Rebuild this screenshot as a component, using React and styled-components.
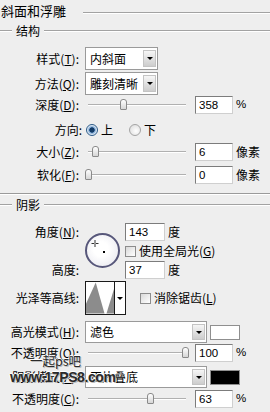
import React from 'react';
import styled, { createGlobalStyle } from 'styled-components';

const Global = createGlobalStyle`
  html, body { margin: 0; padding: 0; background: #eeeeee; }
  body {
    font-family: "Noto Sans CJK SC", "Liberation Sans", sans-serif;
    font-size: 12px;
    color: #000;
  }
`;

const Panel = styled.div`
  position: relative;
  width: 270px;
  height: 412px;
  overflow: hidden;
  display: flex;
  flex-direction: column;
  background: #eeeeee;
`;

const Etched = styled.div`
  flex: 1;
  height: 0;
  border-top: 1px solid #a2a2a2;
  border-bottom: 1px solid #ffffff;
  margin-top: ${(p) => p.$mt || 0}px;
`;

const TitleBar = styled.div`
  height: 21px;
  display: flex;
  align-items: center;
  gap: 17px;
`;

const TitleText = styled.span`
  font-size: 13px;
  line-height: 1;
  padding-left: 1px;
  white-space: nowrap;
`;

const GroupHeader = styled.div`
  height: 18px;
  margin-top: ${(p) => p.$mt}px;
  display: flex;
  align-items: center;
`;

const LeadLine = styled.div`
  width: 12px;
  height: 0;
  border-top: 1px solid #a2a2a2;
  border-bottom: 1px solid #ffffff;
`;

const GroupText = styled.span`
  line-height: 1;
  padding: 0 4px;
  white-space: nowrap;
`;

const Divider = styled.div`
  height: 0;
  margin-top: ${(p) => p.$mt}px;
  border-top: 1px solid #9a9a9a;
  border-bottom: 1px solid #ffffff;
`;

const Row = styled.div`
  display: grid;
  grid-template-columns: 79px 1fr;
  column-gap: 6px;
  align-items: center;
  height: ${(p) => p.$h}px;
  margin-top: ${(p) => p.$mt}px;
`;

const Label = styled.span`
  text-align: right;
  white-space: nowrap;
  line-height: 1;
  margin-right: ${(p) => (p.$shift ? -3 : 0)}px;
`;

const Controls = styled.div`
  display: flex;
  align-items: center;
  height: 100%;
`;

const Slider = styled.div`
  position: relative;
  flex: none;
  width: 104px;
  height: 14px;
`;

const Track = styled.div`
  position: absolute;
  left: 3px;
  right: 3px;
  top: 6px;
  height: 0;
  border-top: 1px solid #b0b0b0;
  border-bottom: 1px solid #ffffff;
`;

const Thumb = styled.div`
  position: absolute;
  top: 1px;
  left: ${(p) => p.$pos}px;
  width: 7px;
  height: 11px;
  box-sizing: border-box;
  border: 1px solid #8a8a8a;
  border-radius: 3px 3px 1px 1px;
  background: linear-gradient(#ffffff, #d6d6d6);
`;

const NumBox = styled.div`
  flex: none;
  width: ${(p) => p.$w || 38}px;
  height: 18px;
  box-sizing: border-box;
  margin-left: ${(p) => p.$ml || 0}px;
  background: #fff;
  border: 1px solid;
  border-color: #7c7c7c #cfcfcf #cfcfcf #7c7c7c;
  font-family: "Liberation Sans", Arial, sans-serif;
  font-size: 11.5px;
  line-height: 16px;
  padding-left: 3px;
`;

const Unit = styled.span`
  margin-left: ${(p) => p.$ml || 3}px;
  line-height: 1;
  white-space: nowrap;
  font-family: ${(p) =>
    p.$latin
      ? '"Liberation Sans", Arial, sans-serif'
      : '"Noto Sans CJK SC", sans-serif'};
  font-size: ${(p) => (p.$latin ? 11.5 : 12)}px;
`;

const Select = styled.div`
  flex: none;
  display: flex;
  width: ${(p) => p.$w}px;
  height: ${(p) => p.$h}px;
  box-sizing: border-box;
  border: 1px solid #9a9a9a;
  background: #fff;
`;

const SelectText = styled.span`
  flex: 1;
  display: flex;
  align-items: center;
  padding-left: 4px;
  line-height: 1;
  white-space: nowrap;
`;

const SelectBtn = styled.span`
  width: 13px;
  margin: 2px 1px 2px 0;
  box-sizing: border-box;
  border: 1px solid #c4c4c4;
  background: linear-gradient(#f6f6f6, #cdcdcd);
  display: flex;
  align-items: center;
  justify-content: center;
`;

const DownArrow = styled.span`
  width: 0;
  height: 0;
  border-left: 3px solid transparent;
  border-right: 3px solid transparent;
  border-top: 3px solid #000;
`;

const Swatch = styled.div`
  flex: none;
  width: 30px;
  height: 15px;
  margin-left: 3px;
  box-sizing: border-box;
  border: 1px solid #8f8f8f;
  background: ${(p) => p.$color};
`;

const RadioDot = styled.span`
  flex: none;
  width: 12px;
  height: 12px;
  box-sizing: border-box;
  border-radius: 50%;
  border: 1px solid ${(p) => (p.$on ? '#2b5a88' : '#a4a4a4')};
  background: ${(p) =>
    p.$on
      ? 'radial-gradient(circle, #123a66 0 2.4px, #6f9ccb 2.8px, #dfeaf6 4.6px)'
      : 'radial-gradient(circle at 60% 60%, #ffffff, #d8d8d8)'};
  margin-left: ${(p) => p.$ml || 0}px;
`;

const OptText = styled.span`
  margin-left: 3px;
  line-height: 1;
  white-space: nowrap;
`;

const Check = styled.span`
  flex: none;
  width: 11px;
  height: 11px;
  box-sizing: border-box;
  border: 1px solid #8c8c8c;
  background: linear-gradient(135deg, #d9d9d9, #ffffff);
  margin-left: ${(p) => p.$ml || 0}px;
`;

const AngleGrid = styled.div`
  display: grid;
  grid-template-columns: 79px 34px 1fr;
  grid-template-rows: 18px 20px 18px;
  column-gap: 6px;
  align-items: center;
  margin-top: ${(p) => p.$mt}px;
`;

const GridLabel = styled(Label)`
  grid-column: 1;
  grid-row: ${(p) => p.$row};
`;

const GridCell = styled.div`
  grid-column: 3;
  grid-row: ${(p) => p.$row};
  display: flex;
  align-items: center;
  height: 100%;
`;

const Dial = styled.div`
  grid-column: 2;
  grid-row: 1 / 4;
  align-self: start;
  margin-top: 10px;
  width: 35px;
  height: 35px;
  box-sizing: border-box;
  border-radius: 50%;
  border: 2px solid #57577a;
  background: radial-gradient(circle at 45% 45%, #ffffff 30%, #e4e4ec);
  display: flex;
  align-items: center;
  justify-content: center;
`;

const Contour = styled.div`
  flex: none;
  display: flex;
  width: 41px;
  height: 34px;
  box-sizing: border-box;
  border: 1px solid #1a1a1a;
  background: #fff;
`;

const ContourArrow = styled.div`
  width: 10px;
  border-left: 1px solid #1a1a1a;
  display: flex;
  align-items: center;
  justify-content: center;
`;

const Watermark = styled.div`
  position: absolute;
  left: ${(p) => p.$x}px;
  top: ${(p) => p.$y}px;
  font-family: ${(p) =>
    p.$latin ? '"Liberation Sans", Arial, sans-serif' : '"Noto Sans CJK SC", sans-serif'};
  font-size: ${(p) => p.$size}px;
  font-weight: ${(p) => (p.$bold ? 700 : 400)};
  line-height: 1;
  color: #2a2a2a;
  letter-spacing: ${(p) => p.$ls || 0}px;
  text-shadow: 1px 1px 0 #bdbdbd, -1px 0 0 #ffffff, 0 -1px 0 #ffffff;
  white-space: nowrap;
  pointer-events: none;
`;

function SliderRow({ label, pos, value, unit, latin, mt }) {
  return (
    <Row $h={18} $mt={mt}>
      <Label>{label}</Label>
      <Controls>
        <Slider>
          <Track />
          <Thumb $pos={pos} />
        </Slider>
        <NumBox $ml={6}>{value}</NumBox>
        <Unit $latin={latin}>{unit}</Unit>
      </Controls>
    </Row>
  );
}

export default function App() {
  return (
    <>
      <Global />
      <Panel>
        <TitleBar>
          <TitleText>斜面和浮雕</TitleText>
          <Etched $mt={5} />
        </TitleBar>

        <GroupHeader $mt={1}>
          <LeadLine />
          <GroupText>结构</GroupText>
          <Etched />
        </GroupHeader>

        <Row $h={23} $mt={7}>
          <Label>
            样式(<u>T</u>):
          </Label>
          <Controls>
            <Select $w={73} $h={23}>
              <SelectText>内斜面</SelectText>
              <SelectBtn>
                <DownArrow />
              </SelectBtn>
            </Select>
          </Controls>
        </Row>

        <Row $h={23} $mt={2}>
          <Label>
            方法(<u>Q</u>):
          </Label>
          <Controls>
            <Select $w={73} $h={23}>
              <SelectText>雕刻清晰</SelectText>
              <SelectBtn>
                <DownArrow />
              </SelectBtn>
            </Select>
          </Controls>
        </Row>

        <SliderRow
          mt={1}
          label={
            <>
              深度(<u>D</u>):
            </>
          }
          pos={35}
          value="358"
          unit="%"
          latin
        />

        <Row $h={18} $mt={7}>
          <Label $shift>方向:</Label>
          <Controls>
            <RadioDot $on $ml={1} />
            <OptText>上</OptText>
            <RadioDot $ml={16} />
            <OptText>下</OptText>
          </Controls>
        </Row>

        <SliderRow
          mt={4}
          label={
            <>
              大小(<u>Z</u>):
            </>
          }
          pos={7}
          value="6"
          unit="像素"
        />

        <SliderRow
          mt={5}
          label={
            <>
              软化(<u>F</u>):
            </>
          }
          pos={0}
          value="0"
          unit="像素"
        />

        <Divider $mt={9} />

        <GroupHeader $mt={1}>
          <LeadLine />
          <GroupText>阴影</GroupText>
          <Etched />
        </GroupHeader>

        <AngleGrid $mt={9}>
          <GridLabel $row={1}>
            角度(<u>N</u>):
          </GridLabel>
          <Dial>
            <svg width="31" height="31" viewBox="0 0 31 31">
              <path d="M8 5v7M4.5 8.5h7" stroke="#333" strokeWidth="1" fill="none" />
              <rect x="7.5" y="8" width="1" height="1" fill="#fff" />
              <rect x="16" y="16" width="2" height="2" fill="#000" />
            </svg>
          </Dial>
          <GridCell $row={1}>
            <NumBox $w={40}>143</NumBox>
            <Unit>度</Unit>
          </GridCell>
          <GridCell $row={2}>
            <Check />
            <OptText>
              使用全局光(<u>G</u>)
            </OptText>
          </GridCell>
          <GridLabel $row={3}>高度:</GridLabel>
          <GridCell $row={3}>
            <NumBox $w={40}>37</NumBox>
            <Unit>度</Unit>
          </GridCell>
        </AngleGrid>

        <Row $h={34} $mt={2}>
          <Label>光泽等高线:</Label>
          <Controls>
            <Contour>
              <svg width="29" height="32" viewBox="0 0 29 32">
                <polygon points="0,32 0,22 10,0 19,32" fill="#8c8c8c" />
                <polygon points="21,32 29,6 29,32" fill="#8c8c8c" />
              </svg>
              <ContourArrow>
                <DownArrow />
              </ContourArrow>
            </Contour>
            <Check $ml={14} />
            <OptText>
              消除锯齿(<u>L</u>)
            </OptText>
          </Controls>
        </Row>

        <Row $h={22} $mt={6}>
          <Label>
            高光模式(<u>H</u>):
          </Label>
          <Controls>
            <Select $w={122} $h={22}>
              <SelectText>滤色</SelectText>
              <SelectBtn>
                <DownArrow />
              </SelectBtn>
            </Select>
            <Swatch $color="#ffffff" />
          </Controls>
        </Row>

        <SliderRow
          mt={1}
          label={
            <>
              不透明度(<u>O</u>):
            </>
          }
          pos={97}
          value="100"
          unit="%"
          latin
        />

        <Row $h={22} $mt={4}>
          <Label>
            阴影模式(<u>A</u>):
          </Label>
          <Controls>
            <Select $w={122} $h={22}>
              <SelectText>正片叠底</SelectText>
              <SelectBtn>
                <DownArrow />
              </SelectBtn>
            </Select>
            <Swatch $color="#000000" />
          </Controls>
        </Row>

        <SliderRow
          mt={2}
          label={
            <>
              不透明度(<u>C</u>):
            </>
          }
          pos={62}
          value="63"
          unit="%"
          latin
        />

        <Watermark $x={30} $y={355} $size={12.5}>
          一起ps吧
        </Watermark>
        <Watermark $x={10} $y={370} $size={14} $bold $latin $ls={-0.4}>
          www.17PS8.com
        </Watermark>
      </Panel>
    </>
  );
}
